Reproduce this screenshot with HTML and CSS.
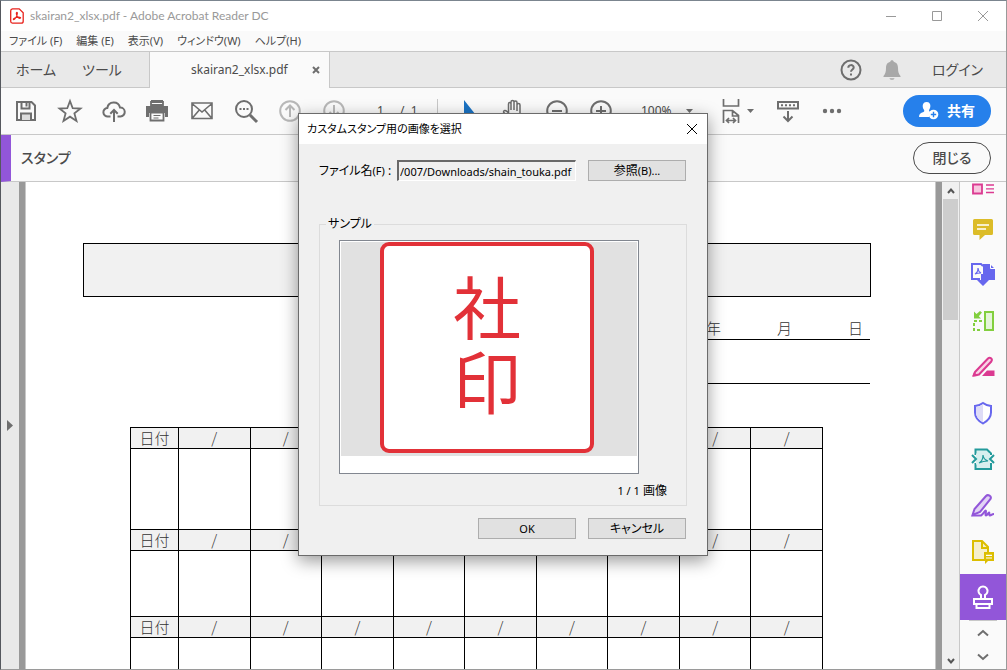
FILE: index.html
```html
<!DOCTYPE html>
<html lang="ja">
<head>
<meta charset="utf-8">
<title>skairan2_xlsx.pdf - Adobe Acrobat Reader DC</title>
<link rel="stylesheet" href="styles.css">
</head>
<body>
<div class="window">
  <header class="titlebar">
    <svg class="app-icon" viewBox="0 0 14 16"><path d="M2.5.8h6.7l4 4v8.4a2 2 0 0 1-2 2H2.5a2 2 0 0 1-1.8-2V2.800a2 2 0 0 1 1.800-2z" fill="#fff" stroke="#e8221c" stroke-width="1.300"/><path d="M3.500 11.600c-1-.8 2-2.200 4.200-2.500 2.600-.4 3.700.8 2.400 1.200C8.500 10.700 6.200 8 6.300 5.300c.1-1.500 1.200-1.200 1.100 0-.2 2.500-2.400 6.700-3.900 6.300z" fill="none" stroke="#e8221c" stroke-width="1.100"/></svg>
    <span class="title">skairan2_xlsx.pdf - Adobe Acrobat Reader DC</span>
    <div class="caption-buttons">
      <button aria-label="最小化"><svg viewBox="0 0 12 12"><path d="M1 6.500h10"/></svg></button>
      <button aria-label="最大化"><svg viewBox="0 0 12 12"><path d="M1.500 1.500h9v9h-9z"/></svg></button>
      <button aria-label="閉じる"><svg viewBox="0 0 12 12"><path d="M1 1l10 10M11 1L1 11"/></svg></button>
    </div>
  </header>

  <nav class="menubar">
    <button>ファイル (F)</button>
    <button>編集 (E)</button>
    <button>表示(V)</button>
    <button>ウィンドウ(W)</button>
    <button>ヘルプ(H)</button>
  </nav>

  <div class="tabbar">
    <button class="nav-tab">ホーム</button>
    <button class="nav-tab">ツール</button>
    <div class="doc-tab">
      <span>skairan2_xlsx.pdf</span>
      <button aria-label="タブを閉じる"><svg viewBox="0 0 8 8"><path d="M1 1l6 6M7 1L1 7"/></svg></button>
    </div>
    <div class="account">
      <button aria-label="ヘルプ"><svg class="ic" viewBox="0 0 24 24"><circle cx="12" cy="12" r="9.500"/><path d="M9.300 9.800c0-3.600 5.400-3.400 5.400-.4 0 2-2.700 2.100-2.700 4.400"/><path d="M12 15.500v2"/></svg></button>
      <button aria-label="通知"><svg class="ic bell" viewBox="0 0 24 24"><path d="M12 2.300c1 0 1.600.6 1.700 1.400C17 4.500 18 7 18 10c0 4 .8 6 2.500 8v1h-17v-1C5.200 16 6 14 6 10c0-3 1-5.500 4.300-6.300.1-.8.700-1.400 1.700-1.400zM9.500 20.300h5c-.5 2-4.500 2-5 0z"/></svg></button>
      <button class="login">ログイン</button>
    </div>
  </div>

  <div class="toolbar">
    <div class="tools">
      <button aria-label="保存"><svg class="ic" viewBox="0 0 24 24"><path d="M3 3h14.500L21 6.500V21H3z"/><path d="M7.500 3v6.500h8V3"/><path d="M12.500 4v3.500"/><path d="M7 21v-6.500h10V21" fill="#ddd"/></svg></button>
      <button aria-label="スター"><svg class="ic" viewBox="0 0 24 24"><path d="M12 2l2.700 7.200 7.800.3-6.100 4.900 2.100 7.600L12 17.700 5.500 22l2.100-7.600-6.100-4.900 7.800-.3z" stroke-width="1.800"/></svg></button>
      <button aria-label="アップロード"><svg class="ic" viewBox="0 0 24 24"><path d="M8.500 17.500H6A4.200 4.200 0 0 1 5.300 9 6.500 6.500 0 0 1 18 8.500a4.500 4.500 0 0 1 .5 9h-3"/><path d="M12 23V11M8.300 14.700L12 11l3.700 3.700"/></svg></button>
      <button aria-label="印刷"><svg class="ic" viewBox="0 0 24 24"><path d="M5 1h12v4H5zM0 7h22v11h-3v-4H3v4H0z" fill="#6e6e6e" stroke="none"/><path d="M5 3h12v3H5zM4.500 13.500h13v8h-13z" fill="#fafafa" stroke-width="1.800"/><path d="M7.500 16.500h7M7.500 19h5" stroke-width="1.200"/></svg></button>
      <button aria-label="メール"><svg class="ic" viewBox="0 0 24 24"><path d="M2 4h20v15.500H2zM2 4.500l10 8.500 10-8.500M2 19.500l7.300-8.500M22 19.500L14.700 11" stroke-width="1.600"/></svg></button>
      <button aria-label="検索"><svg class="ic" viewBox="0 0 24 24"><circle cx="10" cy="10" r="8"/><path d="M16 16l7 7" stroke-width="3"/><path d="M5.500 10h9" stroke-dasharray="2 1.500"/></svg></button>
      <button aria-label="前のページ" class="dim"><svg class="ic" viewBox="0 0 24 24"><circle cx="12" cy="12" r="9.800"/><path d="M12 18V7M7.500 11L12 6.500l4.500 4.500"/></svg></button>
      <button aria-label="次のページ" class="dim"><svg class="ic" viewBox="0 0 24 24"><circle cx="12" cy="12" r="9.800"/><path d="M12 6v11M7.500 13l4.500 4.500 4.500-4.500"/></svg></button>
    </div>
    <div class="pager"><input aria-label="ページ番号" value="1"><span>/ &nbsp;1</span></div>
    <div class="tools view-tools">
      <button aria-label="選択"><svg class="ic" viewBox="0 0 24 24"><path d="M7 1v20l5-5.500h6.500z" fill="#1b73c4" stroke="none"/></svg></button>
      <button aria-label="手のひら"><svg class="ic" viewBox="0 0 24 24"><path d="M7.500 14V5c0-2 2.500-2 2.500 0v6V3c0-2 3-2 3 0v8V3.500c0-2 3-2 3 0V12 6c0-2 3-2 3 0v10c0 4-2 6-6 6-5 0-6-3-10.500-9 0-2 2-2 3.500-.5z" stroke-width="1.500"/></svg></button>
      <button aria-label="縮小"><svg class="ic" viewBox="0 0 24 24"><circle cx="12" cy="12" r="9.800"/><path d="M7 12h10"/></svg></button>
      <button aria-label="拡大"><svg class="ic" viewBox="0 0 24 24"><circle cx="12" cy="12" r="9.800"/><path d="M7 12h10M12 7v10"/></svg></button>
    </div>
    <div class="zoom"><select aria-label="倍率"><option>100%</option></select><svg class="caret" viewBox="0 0 7 4"><path d="M0 0h7L3.500 4z"/></svg></div>
    <div class="tools page-tools">
      <button class="fit" aria-label="幅に合わせる"><svg class="ic" viewBox="0 0 24 24"><path d="M4.500 0v7h15V0M4.500 24V11.500h9l6 5V24M13.500 12v5h6M7.500 21.500h9M10 19l-2.500 2.500L10 24M14 19l2.500 2.500L14 24" stroke-width="1.700"/></svg><svg class="caret" viewBox="0 0 7 4"><path d="M0 0h7L3.500 4z"/></svg></button>
      <button aria-label="スクロール"><svg class="ic" viewBox="0 0 24 24"><path d="M2 3h20v6.500H2zM12 12v9M7.500 17.500L12 22l4.500-4.500"/><path d="M5 6.300h14" stroke-dasharray="2 2"/></svg></button>
      <button aria-label="その他"><svg class="ic" viewBox="0 0 24 24"><g fill="#6e6e6e" stroke="none"><circle cx="5" cy="12" r="2.200"/><circle cx="12" cy="12" r="2.200"/><circle cx="19" cy="12" r="2.200"/></g></svg></button>
    </div>
    <button class="share"><svg viewBox="0 0 20 18"><path d="M7.500 0c3 0 4.300 2 3.800 5-.2 1.500-1.300 2.500-1.300 3.700 0 .8 1 1 1.800 1.500A5.500 5.500 0 0 0 10 15H0c0-3 1.500-4 4.500-5 1-.4 1-1.500.3-2.500C3 5 3.300 0 7.500 0z" fill="#fff"/><circle cx="14.500" cy="12.500" r="4.800" fill="#fff"/><path d="M11.800 12.500h5.400M14.500 9.800v5.400" stroke="#2680eb" stroke-width="1.400"/></svg>共有</button>
  </div>

  <div class="stampbar">
    <h1>スタンプ</h1>
    <button>閉じる</button>
  </div>

  <main class="work">
    <button class="left-rail" aria-label="ナビゲーションを開く"><svg viewBox="0 0 6 11"><path d="M0 0l6 5.500L0 11z"/></svg></button>
    <div class="page">
      <div class="banner"></div>
      <div class="date-line"><span>年</span><span>月</span><span>日</span></div>
      <div class="blank-line"></div>
      <table class="routing">
        <tbody>
          <tr class="days"><th>日付</th><td>/</td><td>/</td><td></td><td></td><td></td><td></td><td></td><td>/</td><td>/</td></tr>
          <tr class="stamps tall"><td></td><td></td><td></td><td></td><td></td><td></td><td></td><td></td><td></td><td></td></tr>
          <tr class="days"><th>日付</th><td>/</td><td>/</td><td></td><td></td><td></td><td></td><td></td><td>/</td><td>/</td></tr>
          <tr class="stamps"><td></td><td></td><td></td><td></td><td></td><td></td><td></td><td></td><td></td><td></td></tr>
          <tr class="days"><th>日付</th><td>/</td><td>/</td><td>/</td><td>/</td><td>/</td><td>/</td><td>/</td><td>/</td><td>/</td></tr>
          <tr class="stamps"><td></td><td></td><td></td><td></td><td></td><td></td><td></td><td></td><td></td><td></td></tr>
        </tbody>
      </table>
    </div>
    <div class="scrollbar">
      <button aria-label="上へ"><svg viewBox="0 0 8 6"><path d="M1 5l3-3.500L7 5"/></svg></button>
      <div class="thumb"></div>
      <button aria-label="下へ"><svg viewBox="0 0 8 6"><path d="M1 1l3 3.500L7 1"/></svg></button>
    </div>
    <aside class="side">
      <div class="side-list">
        <button aria-label="フォーム" class="pink"><svg viewBox="0 0 24 24"><path d="M2 13.500h9v9H2z" fill="#f7c7df" stroke-width="1.800"/><path d="M15 14h8M15 17.800h8M15 21.500h8" stroke-width="1.300"/></svg></button>
        <button aria-label="注釈" class="gold"><svg viewBox="0 0 24 24"><path d="M3.500 2h17a1.500 1.500 0 0 1 1.500 1.500v13a1.500 1.500 0 0 1-1.500 1.500H14l-5.500 5V18h-5A1.500 1.500 0 0 1 2 16.500v-13A1.500 1.500 0 0 1 3.500 2z" fill="#dcbc28" stroke="none"/><path d="M6 8h12M6 12h9" stroke="#fff" stroke-width="1.600"/></svg></button>
        <button aria-label="ファイルを結合" class="indigo"><svg viewBox="0 0 24 24"><path d="M9 16H1V1h9l2 2"/><path d="M12 1h7l5 5v11H12zM10 11h4v6h4l-6 6-6-6h4z" fill="#6767ee" stroke="none"/><path d="M19.500 0v5.500H25" stroke="#fff" stroke-width="1"/><path d="M4 11c2-1 3-3 3-6 0 3 1 4 3 5-3 0-4 0-6 1" stroke-width="1.200"/></svg></button>
        <button aria-label="ページを整理" class="green"><svg viewBox="0 0 24 24"><path d="M14 3h8v18h-8z" fill="#e4f5d8"/><path d="M11 12H3v9h8" stroke-dasharray="3 2"/><path d="M3 2.500v7h7L7.800 7.300 11 3.500 9 2 5.500 5z" fill="#82cf3e" stroke="none"/></svg></button>
        <button aria-label="墨消し" class="pink"><svg viewBox="0 0 24 24"><path d="M4 17L17 3.500c2-2 5 .5 3.300 3L8 19.500l-5 1z" fill="#f9d3e5"/><path d="M11 21l5-5.500h7.500V21zM1 21.500L3 17l4 4z" fill="#db3a91" stroke="none"/></svg></button>
        <button aria-label="保護" class="indigo"><svg viewBox="0 0 24 24"><path d="M12 2c2.500 2 5 2.700 8 3v6.500c0 5-3.500 8.500-8 11-4.500-2.500-8-6-8-11V5c3-.3 5.500-1 8-3z" fill="#fff"/><path d="M12 3.300v18C8 19 5 16 5 11.500V6c2.500-.3 5-1 7-2.700z" fill="#dedcf7" stroke="none"/></svg></button>
        <button aria-label="PDFを最適化" class="teal"><svg viewBox="0 0 24 24"><path d="M4.500 8V2.500H16l4 4V8M4.500 16v6H20v-6" fill="#d8efee"/><path d="M5 6.500h14v11H5z" fill="#d8efee" stroke="none"/><path d="M1 8l4 4-4 4M23 8l-4 4 4 4"/><path d="M8 16c3-1.500 4-4 4-8 .300 4 2 5 5 6-4 0-6 .5-9 2z" stroke-width="1.200"/></svg></button>
        <button aria-label="入力と署名" class="purple"><svg viewBox="0 0 24 24"><path d="M1.500 22l2-6L15 3c2-2 6 0 4.500 3L9 19z" fill="#e2d3f5"/><path d="M1 22.500h9c2-1 4-5 4.500-5 1.500 0-1 5 .5 5s2-3 3-3-.5 3 1 3 1.500-1.500 4-1.500"/></svg></button>
        <button aria-label="注釈用に送信" class="yellow"><svg viewBox="0 0 24 24"><path d="M13 21H2V2h9l6 6v5" fill="#f5efcd"/><path d="M11 2v7h6" /><path d="M13 13h10v9h-6l-3 3v-3h-1z" fill="#dcbe00" stroke="none"/><path d="M15 16.300h6M15 19h6" stroke="#fff" stroke-width="1.200"/></svg></button>
        <button aria-label="スタンプ" class="active"><svg viewBox="0 0 24 24"><path d="M3 14h18v5H3zM5.500 19.500V23h13v-3.500M10 14v-4a4.500 4.500 0 1 1 4 0v4"/></svg></button>
      </div>
      <div class="side-nav">
        <button aria-label="前へ"><svg viewBox="0 0 12 8"><path d="M1 6.500L6 2l5 4.500"/></svg></button>
        <button aria-label="次へ"><svg viewBox="0 0 12 8"><path d="M1 1.500L6 6l5-4.500"/></svg></button>
      </div>
    </aside>
  </main>
</div>

<div class="dialog" role="dialog" aria-labelledby="dialog-title">
  <div class="dialog-title">
    <h2 id="dialog-title">カスタムスタンプ用の画像を選択</h2>
    <button aria-label="閉じる"><svg viewBox="0 0 12 12"><path d="M1 1l10 10M11 1L1 11"/></svg></button>
  </div>
  <div class="dialog-body">
    <div class="file-row">
      <label for="file">ファイル名<small>(F)</small> :</label>
      <input id="file" value="/007/Downloads/shain_touka.pdf">
      <button class="push">参照<small>(B)...</small></button>
    </div>
    <fieldset class="sample">
      <legend>サンプル</legend>
      <div class="preview">
        <div class="preview-cell">
          <div class="seal"><span>社</span><span>印</span></div>
        </div>
      </div>
      <p class="count"><small>1 / 1</small> 画像</p>
    </fieldset>
    <div class="actions">
      <button class="push"><small>OK</small></button>
      <button class="push">キャンセル</button>
    </div>
  </div>
</div>
</body>
</html>
```

FILE: styles.css
```css
* { box-sizing: border-box; }

body {
  margin: 0;
  font: 12px/16px "Noto Sans", "Noto Sans CJK JP", sans-serif;
  font-feature-settings: "palt";
  color: #4b4b4b;
}

button, input, select {
  margin: 0;
  padding: 0;
  border: 0;
  background: none;
  font: inherit;
  font-feature-settings: inherit;
  color: inherit;
  white-space: nowrap;
}

h1, h2, p { margin: 0; }

svg { display: block; fill: none; overflow: visible; }

.window {
  display: flex;
  flex-direction: column;
  height: 100vh;
  overflow: hidden;
  background: #fafafa;
  border: 1px solid #9a9a9a;
  border-top-color: #7b858f;
  border-left-color: #55585e;
}

/* Title bar */
.titlebar {
  display: flex;
  align-items: center;
  flex: none;
  height: 30px;
  padding-left: 9px;
  background: #fff;
  color: #999;
}
.title { font-family: Lato, "Noto Sans", sans-serif; }
.app-icon { width: 14px; height: 16px; margin-right: 6px; }
.caption-buttons { display: flex; margin-left: auto; }
.caption-buttons button { display: grid; place-items: center; width: 46px; height: 28px; }
.caption-buttons svg { width: 12px; height: 12px; stroke: #999; }

/* Menu bar */
.menubar {
  display: flex;
  gap: 14px;
  flex: none;
  height: 21px;
  padding: 0 8px;
  border-bottom: 1px solid #c8c8c8;
  font-size: 11px;
}

/* Tabs */
.tabbar {
  display: flex;
  flex: none;
  height: 36px;
  background: #e9e9e9;
  box-shadow: inset 0 -1px #c8c8c8;
  font-size: 14px;
}
.nav-tab { width: 66px; padding-left: 4px; }
.nav-tab + .nav-tab { margin-right: 16px; }
.doc-tab {
  display: flex;
  align-items: center;
  justify-content: space-between;
  width: 181px;
  padding: 0 9px 0 41px;
  background: #fafafa;
  border: solid #c8c8c8;
  border-width: 0 1px;
  font-size: 12px;
}
.doc-tab svg { width: 8px; height: 8px; stroke: #6e6e6e; stroke-width: 2; }
.account { display: flex; align-items: center; gap: 17px; margin-left: auto; padding-right: 23px; }
.login { padding-left: 11px; }

.ic { width: 24px; height: 24px; stroke: #6e6e6e; stroke-width: 2; }
.bell { fill: #a8a8a8; stroke: none; }

/* Toolbar */
.toolbar {
  display: flex;
  align-items: center;
  flex: none;
  height: 47px;
  padding: 0 15px 0 13px;
  border-bottom: 1px solid #c8c8c8;
}
.tools { display: flex; gap: 20px; }
.dim .ic { stroke: #b8b8b8; }
.pager { display: flex; width: 66px; margin-left: 24px; white-space: nowrap; }
.pager input { width: 30px; padding-left: 7px; }
.view-tools { margin-left: 1px; padding-left: 19px; border-left: 1px solid #c8c8c8; }
.zoom { display: flex; align-items: center; justify-content: space-between; width: 52px; margin-left: 28px; }
.zoom select { appearance: none; }
.caret { width: 7px; height: 4px; fill: #6e6e6e; }
.page-tools { margin-left: 26px; }
.fit { display: flex; align-items: center; gap: 4px; margin-right: 2px; }
.share {
  display: flex;
  align-items: center;
  justify-content: center;
  gap: 8px;
  width: 88px;
  height: 32px;
  margin-left: auto;
  border-radius: 16px;
  background: #2680eb;
  color: #fff;
  font-size: 14px;
  font-weight: 700;
}
.share svg { width: 20px; height: 18px; }

/* Stamp tool header */
.stampbar {
  display: flex;
  align-items: center;
  justify-content: space-between;
  flex: none;
  height: 47px;
  padding: 0 15px 0 10px;
  border-left: 10px solid #9256d9;
  border-bottom: 1px solid #c8c8c8;
}
.stampbar h1 { font-size: 14px; font-weight: 500; }
.stampbar button {
  width: 78px;
  height: 32px;
  border: 1px solid #4b4b4b;
  border-radius: 16px;
  font-size: 14px;
  font-weight: 500;
}

/* Document area */
.work { display: flex; flex: 1; min-height: 0; }
.left-rail {
  display: grid;
  place-items: center;
  width: 24px;
  background: #e9e9e9;
  border-right: 6px solid #999;
}
.left-rail svg { width: 6px; height: 11px; fill: #6e6e6e; }
.page {
  flex: 1;
  min-width: 0;
  overflow: hidden;
  padding-top: 61px;
  background: #fff;
  border: solid #c8c8c8;
  border-width: 0 1px;
  color: #333;
  font: 300 15px/20px "Noto Sans CJK JP", sans-serif;
}
.banner { height: 54px; margin: 0 64px 0 57px; background: #f1f1f1; border: 1px solid #000; }
.date-line {
  display: flex;
  justify-content: flex-end;
  gap: 56px;
  width: 300px;
  height: 43px;
  margin: 0 65px 0 auto;
  padding: 21px 7px 0;
  border-bottom: 1px solid #000;
}
.blank-line { width: 300px; height: 44px; margin: 0 65px 43px auto; border-bottom: 1px solid #000; }

.routing {
  width: calc(100% - 216px);
  margin-left: 104px;
  table-layout: fixed;
  border-collapse: collapse;
}
.routing th, .routing td { padding: 0; border: 1px solid #000; font-weight: 300; text-align: center; }
.routing tr > :first-child { width: 48px; }
.days { height: 21px; background: #f1f1f1; }
.days th, .days td { line-height: 20px; }
.stamps { height: 66px; }
.tall { height: 81px; }

/* Scrollbar */
.scrollbar {
  display: flex;
  flex-direction: column;
  width: 24px;
  padding-left: 1px;
  background: #f0f0f0;
  border-left: 6px solid #999;
  border-right: 1px solid #c8c8c8;
}
.scrollbar button { display: grid; place-items: center; width: 16px; height: 17px; }
.scrollbar svg { width: 8px; height: 6px; stroke: #555; stroke-width: 2; }
.thumb { width: 15px; height: 121px; margin-bottom: auto; background: #cdcdcd; }

/* Tool panel */
.side { display: flex; flex-direction: column; width: 46px; }
.side-list { display: flex; flex: 1; min-height: 0; flex-direction: column; justify-content: flex-end; overflow: hidden; }
.side-list button { display: grid; place-items: center; flex: none; height: 46px; }
.side-list svg { width: 24px; height: 24px; stroke: currentColor; stroke-width: 2; }
.pink { color: #db3a91; }
.gold { color: #dcbc28; }
.indigo { color: #6767ee; }
.green { color: #82cf3e; }
.teal { color: #239a9b; }
.purple { color: #9256d9; }
.yellow { color: #dcbe00; }
.active { background: #9256d9; color: #fff; }
.side-nav { display: grid; height: 49px; margin: 0 9px; border-top: 1px solid #c8c8c8; }
.side-nav button { display: grid; place-items: center; }
.side-nav svg { width: 12px; height: 8px; stroke: #6e6e6e; stroke-width: 2; }

/* Dialog window */
.dialog {
  position: absolute;
  left: 298px;
  top: 113px;
  width: 410px;
  border: 1px solid #6b6b6b;
  background: #f0f0f0;
  box-shadow: 0 5px 16px rgba(0, 0, 0, .4);
  color: #000;
}
.dialog-title {
  display: flex;
  align-items: center;
  justify-content: space-between;
  height: 30px;
  padding: 0 9px 0 8px;
  background: #fff;
}
.dialog-title h2 { font-size: 11px; font-weight: 400; }
.dialog-title svg { width: 12px; height: 12px; stroke: #000; }
.dialog-body { padding: 16px 20px; }
.dialog small { font-size: 11px; }
.file-row { display: flex; align-items: center; gap: 12px; padding-right: 1px; }
.file-row label { width: 66px; white-space: nowrap; }
.file-row input {
  flex: 1;
  min-width: 0;
  height: 21px;
  padding-left: 1px;
  border: 1px solid #fff;
  border-top: 2px solid #696969;
  border-left: 2px solid #696969;
  font-size: 11px;
}
.push { width: 98px; height: 21px; border: 1px solid #adadad; background: #e1e1e1; line-height: 18px; }
.sample { margin: 34px 0 0; padding: 0 19px 6px; border: 1px solid #dcdcdc; }
.sample legend { margin-left: -13px; padding: 0 2px; line-height: 18px; }
.preview { width: 300px; height: 234px; margin-top: 7px; padding: 1px; border: 1px solid #828790; background: #fff; }
.preview-cell { display: flex; justify-content: center; height: 214px; padding-right: 4px; background: #e1e1e1; }
.seal {
  display: flex;
  flex-direction: column;
  align-items: center;
  justify-content: center;
  width: 214px;
  height: 211px;
  padding-bottom: 12px;
  border: 4px solid #e23138;
  border-radius: 9px;
  background: #fff;
  color: #e23138;
  font: 400 68px/75px "Noto Sans CJK JP", sans-serif;
}
.count { margin-top: 9px; text-align: right; }
.actions { display: flex; justify-content: flex-end; gap: 12px; margin-top: 12px; padding-right: 1px; }
```
